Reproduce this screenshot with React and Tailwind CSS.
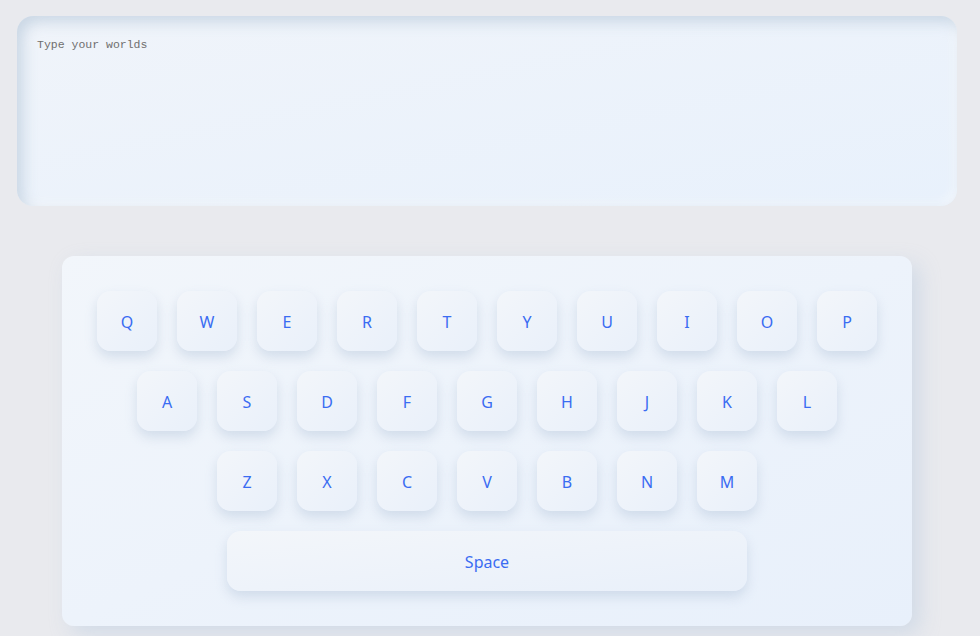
const rows = [
  ['Q', 'W', 'E', 'R', 'T', 'Y', 'U', 'I', 'O', 'P'],
  ['A', 'S', 'D', 'F', 'G', 'H', 'J', 'K', 'L'],
  ['Z', 'X', 'C', 'V', 'B', 'N', 'M'],
];

const Key = ({ label, wide }) => (
  <button
    className={
      (wide ? 'w-[520px] ' : 'w-[60px] ') +
      'h-[60px] pt-[2px] rounded-[14px] bg-gradient-to-br from-[#f3f6fa] to-[#e9f0fa] shadow-[0_6px_12px_rgba(176,192,214,0.45)] flex items-center justify-center text-[16px] text-[#3a6cf2]'
    }
    style={{ fontFamily: '"Noto Sans", "Open Sans", sans-serif' }}
  >
    {label}
  </button>
);

export default function App() {
  return (
    <div className="w-[980px] h-[636px] bg-[#e9eaee] overflow-hidden pt-[16px]">
      <div className="ml-[17px] w-[940px] h-[190px] rounded-[16px] bg-gradient-to-br from-[#f0f4fa] to-[#e8f1fc] shadow-[inset_6px_6px_14px_rgba(190,205,222,0.75),inset_-4px_-4px_10px_rgba(255,255,255,0.5)] px-[20px] py-[22px]">
        <div
          className="text-[11.5px] leading-[14px] text-[#6f6f6f]"
          style={{ fontFamily: '"Liberation Mono", monospace' }}
        >
          Type your worlds
        </div>
      </div>
      <div className="ml-[62px] mt-[50px] w-[850px] h-[370px] rounded-[12px] bg-gradient-to-br from-[#f2f6fb] to-[#e8f0fb] shadow-[8px_8px_20px_rgba(200,212,228,0.7)] p-[35px] flex flex-col items-center gap-[20px]">
        {rows.map((row, i) => (
          <div key={i} className="flex gap-[20px]">
            {row.map((k) => (
              <Key key={k} label={k} />
            ))}
          </div>
        ))}
        <Key label="Space" wide />
      </div>
    </div>
  );
}
